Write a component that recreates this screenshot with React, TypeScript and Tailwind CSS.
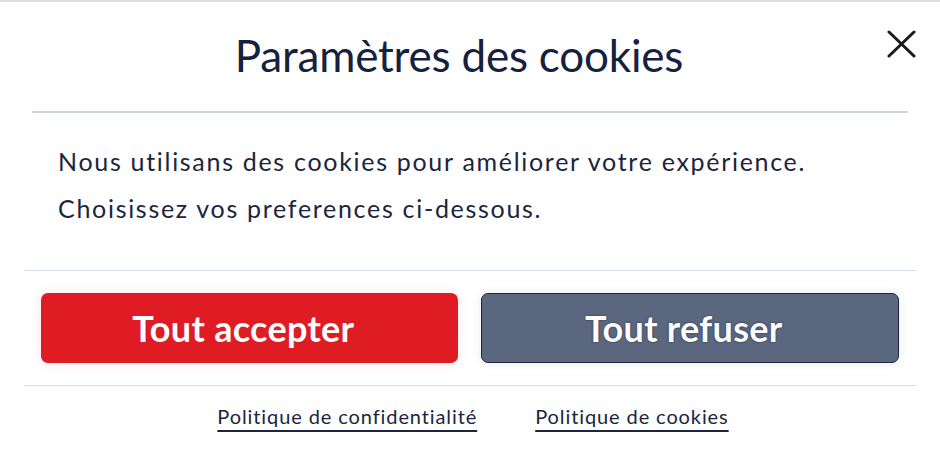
export default function App() {
  return (
    <div className="w-[940px] h-[461px] bg-white border-t-2 border-[#d9dee7] font-['Lato','Open_Sans',sans-serif] text-[#15203a]">
      <div className="relative flex flex-col px-[32px]">
        {/* Header */}
        <div className="h-[111px] flex items-center justify-center pr-[22px] border-b-2 border-[#cdd4e0]">
          <h2 className="text-[44px] leading-none tracking-[-0.2px] text-[#16213d] pb-[4px]">Paramètres des cookies</h2>
        </div>
        <button
          className="absolute right-[22px] top-[26px] p-[2px] text-[#1a1a1a]"
          aria-label="Fermer"
        >
          <svg width="30" height="28" viewBox="0 0 30 28" fill="none" stroke="currentColor" strokeWidth="3" strokeLinecap="round">
            <path d="M3 2 L28 26 M28 2 L3 26" />
          </svg>
        </button>

        {/* Body */}
        <div className="pt-[25px] pb-[38px] pl-[26px] text-[25px] leading-[47px] tracking-[1.7px] text-[#1b2540]">
          <p>Nous utilisans des cookies pour améliorer votre expérience.</p>
          <p>Choisissez vos preferences ci-dessous.</p>
        </div>
      </div>

      {/* Actions */}
      <div className="mx-[24px] border-t border-b border-[#d3dae6] flex gap-[23px] px-[17px] py-[22px]">
        <button className="flex-1 h-[70px] pr-[12px] rounded-[7px] bg-[#df1b24] text-white text-[36px] font-bold tracking-[0.3px] shadow-[0_0_12px_rgba(220,40,40,0.12)]">
          Tout accepter
        </button>
        <button className="flex-1 h-[70px] pr-[12px] rounded-[7px] bg-[#5a677e] border-[1.5px] border-[#1d2840] text-white text-[36px] font-bold tracking-[0.3px] [text-shadow:0_0_2px_#1d2840] shadow-[0_0_10px_rgba(40,50,70,0.1)]">
          Tout refuser
        </button>
      </div>

      {/* Links */}
      <div className="flex justify-center gap-[58px] pt-[18px] pl-[6px] text-[20px] leading-[24px] tracking-[0.9px] text-[#1b2540]">
        <a className="underline underline-offset-[6px] decoration-[1.5px]" href="#">Politique de confidentialité</a>
        <a className="underline underline-offset-[6px] decoration-[1.5px]" href="#">Politique de cookies</a>
      </div>
    </div>
  );
}
